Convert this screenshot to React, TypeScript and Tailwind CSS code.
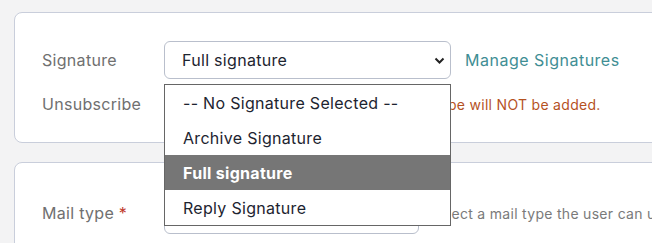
export default function App() {
  const options = ['-- No Signature Selected --', 'Archive Signature', 'Full signature', 'Reply Signature'];
  return (
    <div className="min-h-screen bg-[#f3f3f4] pt-3 pl-[14px] overflow-hidden font-['Inter',sans-serif] tracking-[0.3px]">
      <div className="w-[700px] h-[131px] bg-white border border-[#c9cedb] rounded-lg pl-[27px] pt-[28px]">
        <div className="flex items-center h-[38px]">
          <div className="w-[122px] shrink-0 text-[16px] text-[#707070]">Signature</div>
          <div className="relative shrink-0 w-[287px] h-[38px] border border-[#b9bfcc] rounded-md flex items-center pl-[17px] text-[16px] text-[#1d2430]">
            Full signature
            <svg className="absolute right-[5px] top-[15px]" width="11" height="7" viewBox="0 0 11 7">
              <path d="M1.5 1.5 L5.5 5.5 L9.5 1.5" fill="none" stroke="#222" strokeWidth="2" />
            </svg>
            <div className="absolute z-10 left-[-1px] top-[42px] w-[287px] bg-white border border-[#666666] text-[16px] text-[#1d2430]">
              {options.map((o) => (
                <div
                  key={o}
                  className={
                    o === 'Full signature'
                      ? 'h-[35px] flex items-center pl-[18px] bg-[#767676] text-white font-bold'
                      : 'h-[35px] flex items-center pl-[18px]'
                  }
                >
                  {o}
                </div>
              ))}
            </div>
          </div>
          <a className="ml-[14px] text-[16px] text-[#3f8e94] tracking-[0.5px] whitespace-nowrap">Manage Signatures</a>
        </div>
        <div className="flex items-center h-[38px] mt-[6px]">
          <div className="w-[122px] shrink-0 text-[16px] text-[#707070]">Unsubscribe</div>
          <div className="flex items-center text-[14px] text-[#b5521f] whitespace-nowrap">
            <span className="w-4 h-4 border border-[#999] rounded mr-[30px]" />
            If unchecked, the link to unsubscribe will NOT be added.
          </div>
        </div>
      </div>
      <div className="mt-[19px] w-[700px] h-[120px] bg-white border border-[#c9cedb] rounded-lg pl-[27px] pt-[29px]">
        <div className="flex items-center h-[42px]">
          <div className="w-[122px] shrink-0 text-[16px] text-[#707070] whitespace-nowrap">
            Mail type <span className="text-[#c0392b]">*</span>
          </div>
          <div className="w-[255px] shrink-0 h-[42px] border border-[#b9bfcc] rounded-md" />
          <div className="ml-[11px] text-[14px] text-[#7a7a7a] whitespace-nowrap">
            Select a mail type the user can use for this template
          </div>
        </div>
      </div>
    </div>
  );
}
